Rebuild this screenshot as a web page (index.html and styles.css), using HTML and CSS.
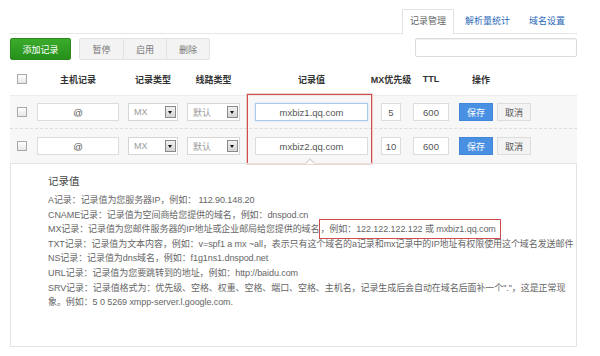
FILE: index.html
```html
<!DOCTYPE html>
<html lang="zh-CN">
<head>
    <meta charset="UTF-8">
    <title>记录管理</title>
    <link rel="stylesheet" href="styles.css">
</head>
<body>
    <div class="page">
        <div class="tabs">
            <span class="tab active">记录管理</span>
            <a class="tab">解析量统计</a>
            <a class="tab">域名设置</a>
        </div>

        <div class="toolbar">
            <button class="btn-add">添加记录</button>
            <div class="btn-group">
                <button>暂停</button>
                <button>启用</button>
                <button>删除</button>
            </div>
            <input class="search" type="text">
        </div>

        <div class="records">
            <div class="row head">
                <span class="cell"><span class="check"></span></span>
                <span class="cell"><span class="title w-host">主机记录</span></span>
                <span class="cell"><span class="title w-type">记录类型</span></span>
                <span class="cell"><span class="title w-line">线路类型</span></span>
                <span class="cell"><span class="title w-value">记录值</span></span>
                <span class="cell"><span class="title w-mx">MX优先级</span></span>
                <span class="cell"><span class="title w-ttl">TTL</span></span>
                <span class="cell"><span class="title-op">操作</span></span>
            </div>
            <div class="row rec">
                <span class="cell"><span class="check"></span></span>
                <span class="cell"><span class="field w-host">@</span></span>
                <span class="cell"><span class="select w-type">MX<i class="arrow"></i></span></span>
                <span class="cell"><span class="select w-line">默认<i class="arrow"></i></span></span>
                <span class="cell"><span class="field w-value focus">mxbiz1.qq.com</span></span>
                <span class="cell"><span class="field w-mx">5</span></span>
                <span class="cell"><span class="field w-ttl">600</span></span>
                <span class="cell"><button class="btn-save">保存</button><button class="btn-cancel">取消</button></span>
            </div>
            <div class="row rec">
                <span class="cell"><span class="check"></span></span>
                <span class="cell"><span class="field w-host">@</span></span>
                <span class="cell"><span class="select w-type">MX<i class="arrow"></i></span></span>
                <span class="cell"><span class="select w-line">默认<i class="arrow"></i></span></span>
                <span class="cell"><span class="field w-value">mxbiz2.qq.com</span></span>
                <span class="cell"><span class="field w-mx">10</span></span>
                <span class="cell"><span class="field w-ttl">600</span></span>
                <span class="cell"><button class="btn-save">保存</button><button class="btn-cancel">取消</button></span>
            </div>
            <div class="mark"></div>
        </div>

        <div class="help">
            <h3>记录值</h3>
            <p>A记录：记录值为您服务器IP，例如： 112.90.148.20</p>
            <p>CNAME记录：记录值为空间商给您提供的域名，例如：dnspod.cn</p>
            <p>MX记录：记录值为您邮件服务器的IP地址或企业邮局给您提供的域名<span class="mark-text">，例如：122.122.122.122 或 mxbiz1.qq.com</span></p>
            <p>TXT记录：记录值为文本内容，例如：v=spf1 a mx ~all，表示只有这个域名的a记录和mx记录中的IP地址有权限使用这个域名发送邮件</p>
            <p>NS记录：记录值为dns域名，例如：f1g1ns1.dnspod.net</p>
            <p>URL记录：记录值为您要跳转到的地址，例如：http://baidu.com</p>
            <p>SRV记录：记录值格式为：优先级、空格、权重、空格、端口、空格、主机名，记录生成后会自动在域名后面补一个"."，这是正常现<br>象。例如：5 0 5269 xmpp-server.l.google.com.</p>
        </div>
    </div>
</body>
</html>
```

FILE: styles.css
```css
* {
    box-sizing: border-box;
}
body {
    margin: 0;
    background: #fff;
    font-family: "Liberation Sans", "Noto Sans CJK SC", sans-serif;
    font-size: 9px;
    color: #555;
}
.page {
    width: 577px;
    padding-left: 10px;
}

/* tabs */
.tabs {
    display: flex;
    justify-content: flex-end;
    gap: 3px;
    margin-top: 9px;
    padding-right: 4px;
    border-bottom: 1px solid #e6e6e6;
}
.tab {
    padding: 0 7px;
    line-height: 23px;
    border: 1px solid transparent;
    border-bottom: 0;
    color: #2a68b8;
}
.tab.active {
    color: #666;
    background: #fff;
    border-color: #e3e3e3;
    margin-bottom: -1px;
    height: 25px;
}

/* toolbar */
.toolbar {
    display: flex;
    align-items: flex-start;
    margin-top: 4px;
    height: 22px;
}
button {
    font-family: inherit;
    font-size: 9px;
    cursor: pointer;
}
.btn-add {
    width: 61px;
    height: 22px;
    border: 1px solid #2b8a1c;
    border-radius: 2px;
    background: linear-gradient(#3cab2c, #25901a);
    color: #fff;
    padding: 0;
}
.btn-group {
    display: flex;
    margin-left: 8px;
    border: 1px solid #e2e2e2;
    border-radius: 2px;
    background: #f3f3f3;
}
.btn-group button {
    height: 20px;
    border: 0;
    background: none;
    color: #777;
    padding: 0;
    width: 43px;
}
.btn-group button + button {
    border-left: 1px solid #e2e2e2;
}
.search {
    margin-left: auto;
    width: 162px;
    height: 19px;
    border: 1px solid #dcdcdc;
    border-radius: 2px;
    box-shadow: inset 0 1px 1px #f0f0f0;
}

/* records table */
.records {
    position: relative;
}
.row {
    display: grid;
    grid-template-columns: 27px 91px 59px 68px 126px 32px 46px 1fr;
    align-items: center;
}
.head {
    height: 36px;
    padding-top: 3px;
    border-bottom: 1px solid #ebebeb;
    color: #333;
    font-weight: bold;
}
.rec {
    background: #f7f7f7;
    padding: 7px 0;
}
.rec + .rec {
    border-top: 1px dashed #dcdcdc;
    padding: 8px 0 8px;
}
.cell {
    display: flex;
    align-items: center;
}
.title {
    display: flex;
    justify-content: center;
    white-space: nowrap;
}
.title-op {
    padding-left: 13px;
}
.check {
    width: 10px;
    height: 10px;
    margin-left: 7px;
    border: 1px solid #a9a9a9;
    background: linear-gradient(#fff, #e6e6e6);
}
.w-host { width: 82px; }
.w-type { width: 50px; }
.w-line { width: 53px; }
.w-value { width: 113px; }
.w-mx { width: 20px; }
.w-ttl { width: 36px; }

.field {
    display: flex;
    align-items: center;
    justify-content: center;
    height: 18px;
    background: #fff;
    border: 1px solid #dcdcdc;
    color: #555;
    font-size: 9.5px;
}
.field.focus {
    border-color: #a9c9ea;
    box-shadow: 0 0 2px #c7ddf3;
}
.select {
    position: relative;
    display: flex;
    align-items: center;
    height: 18px;
    padding-left: 5px;
    background: #fff;
    border: 1px solid #d6d6d6;
    color: #999;
}
.arrow {
    position: absolute;
    right: 1px;
    top: 2px;
    width: 11px;
    height: 12px;
    border: 1px solid #8a8a8a;
    background: linear-gradient(#f2f2f2, #d4d4d4);
}
.arrow::after {
    content: "";
    position: absolute;
    left: 2px;
    top: 4px;
    border-left: 2.5px solid transparent;
    border-right: 2.5px solid transparent;
    border-top: 3px solid #111;
}
.btn-save {
    width: 34px;
    height: 18px;
    padding: 0;
    border: 1px solid #3f86dc;
    background: #4a90e2;
    color: #fff;
}
.btn-cancel {
    width: 34px;
    height: 18px;
    padding: 0;
    margin-left: 4px;
    border: 1px solid #ddd;
    background: #f3f3f3;
    color: #555;
}
.mark {
    position: absolute;
    left: 237px;
    top: 34px;
    width: 125px;
    height: 70px;
    border: 1px solid #cf4d4d;
    box-shadow: 0 0 0 1px rgba(207, 77, 77, 0.25);
}

/* help panel */
.help {
    position: relative;
    height: 184px;
    padding: 9px 0 0 37px;
    border: 1px solid #e3e3e3;
    color: #666;
}
.help::before {
    content: "";
    position: absolute;
    left: 294px;
    top: -6px;
    border-left: 5px solid transparent;
    border-right: 5px solid transparent;
    border-bottom: 5px solid #d8d8d8;
}
.help::after {
    content: "";
    position: absolute;
    left: 295px;
    top: -4px;
    border-left: 4px solid transparent;
    border-right: 4px solid transparent;
    border-bottom: 4px solid #fff;
}
.help h3 {
    margin: 0 0 4px;
    font-size: 10.5px;
    font-weight: normal;
    line-height: 16px;
    color: #444;
}
.help p {
    margin: 0;
    line-height: 14.6px;
    letter-spacing: -0.08px;
    white-space: nowrap;
}
.mark-text {
    padding: 4px 4px 4px 0;
    border: 1px solid #cf4d4d;
}
```
